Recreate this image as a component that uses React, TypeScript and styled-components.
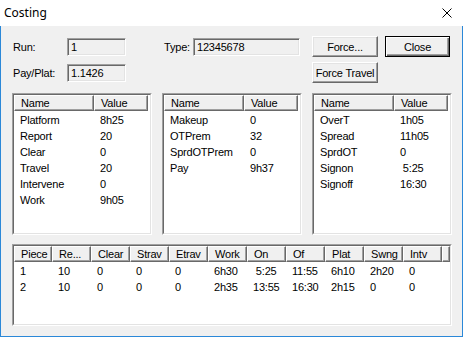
import React from 'react';
import styled, { createGlobalStyle, css } from 'styled-components';

const GlobalStyle = createGlobalStyle`
  html, body { margin: 0; padding: 0; background: #fff; }
  body {
    width: 463px; height: 337px; overflow: hidden;
    font-family: "Liberation Sans", Arial, sans-serif;
  }
  * { box-sizing: border-box; }
`;

const Window = styled.div`
  width: 463px;
  height: 337px;
  display: flex;
  flex-direction: column;
  background: #fff;
`;

const TitleBar = styled.div`
  height: 26px;
  flex: none;
  display: flex;
  align-items: center;
  justify-content: space-between;
  padding: 0 11px 0 4px;
  background: #fff;
`;

const Title = styled.span`
  font-family: "Noto Sans", "Open Sans", sans-serif;
  font-size: 12px;
  color: #000;
  line-height: 1;
`;

const CloseGlyph = styled.svg`
  display: block;
  width: 10px;
  height: 10px;
`;

const Body = styled.div`
  flex: 1;
  display: flex;
  flex-direction: column;
  background: #f0f0f0;
  border: 1px solid #2b88d8;
  border-top: none;
  padding: 10px 10px 10px 11px;
  font-family: "Liberation Sans", Arial, sans-serif;
  font-size: 11px;
  letter-spacing: -0.2px;
  color: #000;
`;

const TopGrid = styled.div`
  display: grid;
  grid-template-columns: 55px 59px 37px 30px 107px 12px 66px 7px 65px;
  grid-template-rows: 21px 21px;
  row-gap: 5px;
  align-items: center;
  margin-bottom: 10px;
`;

const Label = styled.span<{ $col: number; $row: number }>`
  grid-column: ${(p) => p.$col};
  grid-row: ${(p) => p.$row};
  white-space: nowrap;
  padding-left: 1px;
`;

const Field = styled.div<{ $col: number; $row: number }>`
  grid-column: ${(p) => p.$col};
  grid-row: ${(p) => p.$row};
  height: 18px;
  background: #f0f0f0;
  border: 1px solid;
  border-color: #a0a0a0 #fff #fff #a0a0a0;
  box-shadow: inset 1px 1px #696969, inset -1px -1px #e3e3e3;
  padding-left: 3px;
  display: flex;
  align-items: center;
  white-space: nowrap;
`;

const Button = styled.button<{ $col: number; $row: number; $default?: boolean }>`
  grid-column: ${(p) => p.$col};
  grid-row: ${(p) => p.$row};
  height: 21px;
  width: 100%;
  margin: 0;
  padding: 0;
  font: inherit;
  letter-spacing: inherit;
  color: #000;
  background: #f0f0f0;
  white-space: nowrap;
  border: 1px solid;
  border-color: #fff #696969 #696969 #fff;
  box-shadow: inset -1px -1px #a0a0a0, inset 1px 1px #e3e3e3;
  ${(p) =>
    p.$default &&
    css`
      border-color: #000;
      box-shadow: inset 1px 1px #fff, inset -1px -1px #696969, inset -2px -2px #a0a0a0;
    `}
`;

const ListsRow = styled.div`
  display: flex;
  gap: 10px;
  height: 142px;
  flex: none;
  margin-bottom: 9px;
`;

const ListFrame = styled.div<{ $grow?: boolean }>`
  width: ${(p) => (p.$grow ? 'auto' : '140px')};
  flex: ${(p) => (p.$grow ? '1' : 'none')};
  border: 1px solid;
  border-color: #a0a0a0 #fff #fff #a0a0a0;
  display: flex;
`;

const ListPane = styled.div`
  flex: 1;
  border: 1px solid;
  border-color: #696969 #e3e3e3 #e3e3e3 #696969;
  background: #fff;
  display: flex;
  flex-direction: column;
  overflow: hidden;
`;

const HeaderRow = styled.div`
  display: flex;
  height: 16px;
  flex: none;
`;

const HeadCell = styled.div<{ $w?: number }>`
  width: ${(p) => (p.$w ? `${p.$w}px` : 'auto')};
  flex: ${(p) => (p.$w ? 'none' : '1')};
  height: 16px;
  background: #f0f0f0;
  border-top: 1px solid #fff;
  border-left: 1px solid #fff;
  border-right: 1px solid #696969;
  border-bottom: 1px solid #696969;
  box-shadow: inset -1px -1px #a0a0a0;
  padding-left: 6px;
  display: flex;
  align-items: center;
  white-space: nowrap;
  overflow: hidden;
`;

const Rows = styled.div`
  padding-top: 1px;
  display: flex;
  flex-direction: column;
`;

const Row = styled.div`
  display: flex;
  height: 16px;
  align-items: center;
`;

const Cell = styled.div<{ $w: number }>`
  width: ${(p) => p.$w}px;
  flex: none;
  padding-left: 6px;
  white-space: pre;
  overflow: hidden;
`;

type Pair = [string, string];

const list1: Pair[] = [
  ['Platform', '8h25'],
  ['Report', '20'],
  ['Clear', '0'],
  ['Travel', '20'],
  ['Intervene', '0'],
  ['Work', '9h05'],
];
const list2: Pair[] = [
  ['Makeup', '0'],
  ['OTPrem', '32'],
  ['SprdOTPrem', '0'],
  ['Pay', '9h37'],
];
const list3: Pair[] = [
  ['OverT', '1h05'],
  ['Spread', '11h05'],
  ['SprdOT', '0'],
  ['Signon', ' 5:25'],
  ['Signoff', '16:30'],
];

const pieceCols = ['Piece', 'Re...', 'Clear', 'Strav', 'Etrav', 'Work', 'On', 'Of', 'Plat', 'Swng', 'Intv'];
const pieceWidths = [38, 39, 39, 39, 39, 39, 39, 39, 39, 39, 39];
const pieceRows = [
  ['1', '10', '0', '0', '0', '6h30', ' 5:25', '11:55', '6h10', '2h20', '0'],
  ['2', '10', '0', '0', '0', '2h35', '13:55', '16:30', '2h15', '0', '0'],
];

const NameValueList: React.FC<{ items: Pair[] }> = ({ items }) => (
  <ListFrame>
    <ListPane>
      <HeaderRow>
        <HeadCell $w={80}>Name</HeadCell>
        <HeadCell $w={54}>Value</HeadCell>
      </HeaderRow>
      <Rows>
        {items.map(([n, v]) => (
          <Row key={n}>
            <Cell $w={80}>{n}</Cell>
            <Cell $w={54}>{v}</Cell>
          </Row>
        ))}
      </Rows>
    </ListPane>
  </ListFrame>
);

export default function App() {
  return (
    <>
      <GlobalStyle />
      <Window>
        <TitleBar>
          <Title>Costing</Title>
          <CloseGlyph viewBox="0 0 10 10">
            <path d="M0.5 0.5 L9.5 9.5 M9.5 0.5 L0.5 9.5" stroke="#000" strokeWidth="1" fill="none" />
          </CloseGlyph>
        </TitleBar>
        <Body>
          <TopGrid>
            <Label $col={1} $row={1}>Run:</Label>
            <Field $col={2} $row={1}>1</Field>
            <Label $col={4} $row={1}>Type:</Label>
            <Field $col={5} $row={1}>12345678</Field>
            <Button $col={7} $row={1}>Force...</Button>
            <Button $col={9} $row={1} $default>Close</Button>
            <Label $col={1} $row={2}>Pay/Plat:</Label>
            <Field $col={2} $row={2}>1.1426</Field>
            <Button $col={7} $row={2}>Force Travel</Button>
          </TopGrid>
          <ListsRow>
            <NameValueList items={list1} />
            <NameValueList items={list2} />
            <NameValueList items={list3} />
          </ListsRow>
          <ListFrame $grow>
            <ListPane>
              <HeaderRow>
                {pieceCols.map((c, i) => (
                  <HeadCell key={c} $w={pieceWidths[i]}>{c}</HeadCell>
                ))}
                <HeadCell />
              </HeaderRow>
              <Rows>
                {pieceRows.map((r) => (
                  <Row key={r[0]}>
                    {r.map((v, i) => (
                      <Cell key={i} $w={pieceWidths[i]}>{v}</Cell>
                    ))}
                  </Row>
                ))}
              </Rows>
            </ListPane>
          </ListFrame>
        </Body>
      </Window>
    </>
  );
}
